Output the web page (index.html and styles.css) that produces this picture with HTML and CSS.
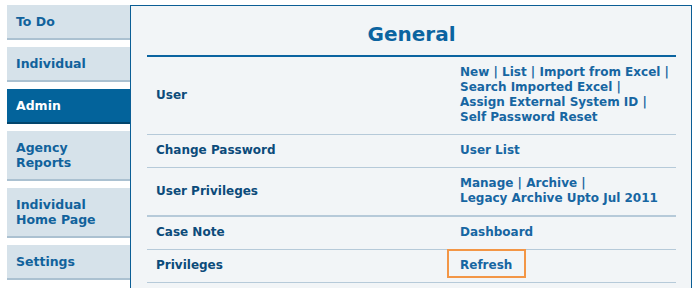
FILE: index.html
```html
<!DOCTYPE html>
<html lang="en">
<head>
<meta charset="utf-8">
<title>General</title>
<link rel="stylesheet" href="styles.css">
</head>
<body>
<div class="layout">
  <nav class="sidebar">
    <a class="tab">To Do</a>
    <a class="tab">Individual</a>
    <a class="tab active">Admin</a>
    <a class="tab">Agency<br>Reports</a>
    <a class="tab">Individual<br>Home Page</a>
    <a class="tab">Settings</a>
  </nav>
  <main class="panel">
    <h1 class="title">General</h1>
    <table class="menu">
      <tr>
        <td class="label">User</td>
        <td class="links"><a>New</a> | <a>List</a> | <a>Import from Excel</a> |<br><a>Search Imported Excel</a> |<br><a>Assign External System ID</a> |<br><a>Self Password Reset</a></td>
      </tr>
      <tr>
        <td class="label">Change Password</td>
        <td class="links"><a>User List</a></td>
      </tr>
      <tr class="thick">
        <td class="label">User Privileges</td>
        <td class="links"><a>Manage</a> | <a>Archive</a> |<br><a>Legacy Archive Upto Jul 2011</a></td>
      </tr>
      <tr>
        <td class="label">Case Note</td>
        <td class="links"><a>Dashboard</a></td>
      </tr>
      <tr>
        <td class="label">Privileges</td>
        <td class="links hl-cell"><a>Refresh</a><span class="highlight"></span></td>
      </tr>
      <tr>
        <td class="label">&nbsp;</td>
        <td class="links">&nbsp;</td>
      </tr>
    </table>
  </main>
</div>
</body>
</html>
```
FILE: styles.css
```css
html, body {
  margin: 0;
  padding: 0;
  background: #ffffff;
  overflow: hidden;
}
body {
  font-family: "DejaVu Sans", Verdana, sans-serif;
  font-weight: bold;
  width: 698px;
  height: 288px;
}
.layout {
  display: flex;
  align-items: flex-start;
  padding: 5px 6px 0 7px;
}
.sidebar {
  width: 123px;
  display: flex;
  flex-direction: column;
  gap: 7px;
  flex: none;
}
.tab {
  display: block;
  background: #d6e2ea;
  border-bottom: 2px solid #abc1d1;
  color: #11629c;
  font-size: 12.5px;
  line-height: 15px;
  padding: 9px 9px 9px 9px;
}
.tab.active {
  background: #03639b;
  border-bottom-color: #03466d;
  color: #ffffff;
}
.panel {
  flex: 1;
  background: #f2f5f7;
  border: 1px solid #0b5e95;
  padding: 0 15px 0 16px;
  min-height: 320px;
}
.title {
  margin: 16px 0 0 0;
  font-size: 20px;
  line-height: 24px;
  text-align: center;
  color: #0b64a0;
  padding-bottom: 9px;
  border-bottom: 2px solid #0b64a0;
}
.menu {
  width: 100%;
  table-layout: fixed;
  border-collapse: collapse;
  font-size: 12px;
  line-height: 15px;
}
.menu td {
  box-sizing: border-box;
  padding: 8px 9px 9px 9px;
  border-bottom: 1px solid #b6cad9;
  vertical-align: middle;
}
.menu tr.thick td {
  border-bottom-width: 2px;
}
.label {
  width: 304px;
  color: #0c4b7a;
}
.links {
  color: #1766a2;
  white-space: nowrap;
}
.links a {
  color: #1766a2;
}
.hl-cell {
  position: relative;
}
.highlight {
  position: absolute;
  left: -4px;
  top: -1px;
  width: 75px;
  height: 25px;
  border: 2px solid #f39646;
}
```
